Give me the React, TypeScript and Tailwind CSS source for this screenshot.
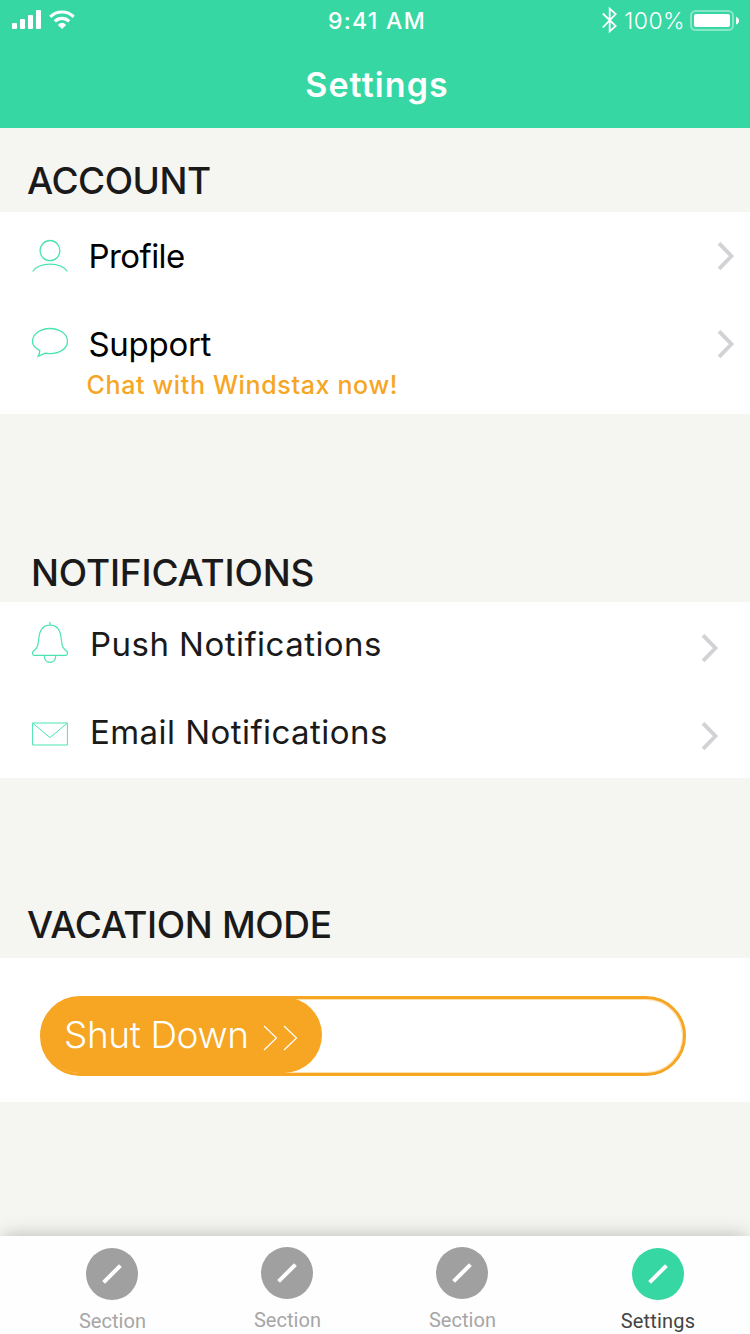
import React from "react";
import type { ReactNode } from "react";

function StatusBar() {
  return (
    <div className="flex h-[41px] items-center justify-between pr-[10px] pl-3">
      <div className="flex w-[240px] items-center gap-2">
        <svg className="-mt-px" width="29" height="20" viewBox="0 0 29 20" fill="#fff">
          <rect x="0" y="13" width="5" height="6" rx="1" />
          <rect x="8" y="9" width="5" height="10" rx="1" />
          <rect x="16" y="5" width="5" height="14" rx="1" />
          <rect x="24" y="0" width="5" height="19" rx="1" />
        </svg>
        <svg className="-mt-px" width="26" height="20" viewBox="0 0 26 20" fill="none" stroke="#fff" strokeWidth="3.2">
          <path d="M1.3 6.8A16.6 16.6 0 0 1 24.7 6.8" />
          <path d="M5.8 11.4A10.2 10.2 0 0 1 20.2 11.4" />
          <path d="M13 19L8.8 14.9Q13 10.8 17.2 14.9Z" fill="#fff" stroke="none" />
        </svg>
      </div>
      <span className="pl-[2px] text-[23px] leading-7 font-medium tracking-[1.3px]">9:41 AM</span>
      <div className="flex w-[240px] items-center justify-end">
        <svg className="-mt-px" width="15" height="28" viewBox="0 0 15 28" fill="none" stroke="#fff" strokeWidth="1.8">
          <path d="M.8 7.5L13.7 20L7.7 25.3V2.7L13.7 8L.8 21.5" />
        </svg>
        <span className="ml-[7px] text-[23px] leading-7 font-[350] tracking-[0.4px]">100%</span>
        <svg className="ml-[5px]" width="50" height="22" viewBox="0 0 50 22" fill="#fff">
          <rect x="1" y="1" width="42" height="19" rx="4.5" fill="none" stroke="#fff" strokeOpacity=".4" strokeWidth="2" />
          <rect x="4" y="4" width="36" height="13" rx="2" />
          <path d="M46 6.8Q49 8 49 10.7T46 14.6Z" />
        </svg>
      </div>
    </div>
  );
}

function Chevron() {
  return (
    <svg width="18" height="30" viewBox="0 0 18 30" fill="none" stroke="#d1d1d6" strokeWidth="3.8">
      <path d="M2 2.3L14.5 15.1L2 27.9" />
    </svg>
  );
}

function LineIcon({ children }: { children: ReactNode }) {
  return (
    <svg className="shrink-0" width="36" height="48" viewBox="0 0 36 48" fill="none" stroke="#4ce3b4" strokeWidth="1.3">
      {children}
    </svg>
  );
}

function Tab({ label, active, raised }: { label: string; active?: boolean; raised?: boolean }) {
  return (
    <div className={`flex w-[175px] flex-col items-center ${raised ? "pt-[11px]" : "pt-3"} ${active ? "ml-[21px]" : ""}`}>
      <div className={`flex size-[52px] items-center justify-center rounded-full ${active ? "bg-[#36d7a2]" : "bg-[#a0a0a0]"}`}>
        <svg width="22" height="22" viewBox="0 0 22 22" stroke="#fff" strokeWidth="4">
          <path d="M2.6 19.4L19.4 2.6" />
        </svg>
      </div>
      <span
        className={`mt-[9px] font-[Roboto,sans-serif] text-[20px] leading-6 ${active ? "tracking-[0.2px] text-[#444]" : "pl-px tracking-[0.05px] text-[#a6a6a6]"}`}
      >
        {label}
      </span>
    </div>
  );
}

export default function App() {
  return (
    <div className="flex h-[1334px] w-[750px] flex-col overflow-hidden bg-[#f5f5f1] font-[Inter,sans-serif] whitespace-nowrap">
      <header className="h-32 bg-[#36d7a2] text-white">
        <StatusBar />
        <h1 className="pl-[4px] text-center text-[34px] leading-[87px] font-semibold tracking-[1.1px]">Settings</h1>
      </header>

      <h2 className="h-[84px] pt-[21px] pl-[27px] text-[37px] leading-[63px] font-[480] tracking-[-0.5px] text-[#1a1a1a]">
        ACCOUNT
      </h2>
      <section className="bg-white text-[33px] leading-10 text-black">
        <div className="flex h-[88px] items-center pr-[15px] pl-8">
          <LineIcon>
            <ellipse cx="18" cy="18.6" rx="9.9" ry="10.1" />
            <path d="M.7 39.5C4 34.6 11 32.1 18 32.1S32 34.6 35.3 39.5" />
          </LineIcon>
          <span className="ml-[20.5px] grow tracking-[-0.57px]">Profile</span>
          <Chevron />
        </div>
        <div className="flex h-[114px] flex-col gap-[2px] pt-5">
          <div className="flex items-center pr-[15px] pl-8">
            <LineIcon>
              <path d="M7.7 30.3C3.3 28.2.5 24.9.5 21.3C.5 14.1 8.3 8.5 18 8.5S35.5 14.1 35.5 21.3S27.7 33.6 18 33.6C16.5 33.6 15 33.4 13.4 33.1C11 34.2 8.5 35.2 6.2 36.2C7.2 34.3 7.9 32.3 7.7 30.3Z" />
            </LineIcon>
            <span className="ml-[20.5px] grow tracking-[-0.3px]">Support</span>
            <Chevron />
          </div>
          <p className="pl-[86.5px] text-[25px] leading-[30px] font-medium tracking-[0.64px] text-[#f6a623]">
            Chat with Windstax now!
          </p>
        </div>
      </section>

      <h2 className="h-[188px] pt-[130px] pl-[31px] text-[37px] leading-[58px] font-[480] tracking-[-0.15px] text-[#1a1a1a]">
        NOTIFICATIONS
      </h2>
      <section className="bg-white text-[33px] leading-10 text-[#1a1a1a]">
        <div className="flex h-[88px] items-center pr-[31px] pl-8">
          <LineIcon>
            <path
              strokeWidth="1.2"
              d="M18 0V3.2M18 3.2C13.5 3.2 10.2 5.3 8.5 9.2C6.8 13 6.8 18 5.8 23.2C5.2 26.5 3.8 27 1.7 28.8C-.2 30.4 .4 33.4 2.4 33.4H33.6C35.6 33.4 36.2 30.4 34.3 28.8C32.2 27 30.8 26.5 30.2 23.2C29.2 18 29.2 13 27.5 9.2C25.8 5.3 22.5 3.2 18 3.2ZM12.3 33.8C12.3 37.8 14.8 40.3 18 40.3S23.7 37.8 23.7 33.8"
            />
          </LineIcon>
          <span className="ml-[22px] grow pb-[4px] tracking-[0.46px]">Push Notifications</span>
          <div className="pt-1">
            <Chevron />
          </div>
        </div>
        <div className="flex h-[88px] items-center pr-[31px] pl-8">
          <LineIcon>
            <path strokeWidth="1" d="M.6 13H35.4V35H.6ZM.8 13.2L18 27.6L35.2 13.2" />
          </LineIcon>
          <span className="ml-[22px] grow pb-[4px] tracking-[0.44px]">Email Notifications</span>
          <div className="pt-1">
            <Chevron />
          </div>
        </div>
      </section>

      <h2 className="h-[180px] pt-[113px] pl-[27px] text-[37px] leading-[67px] font-[480] tracking-[-0.37px] text-[#1a1a1a]">
        VACATION MODE
      </h2>
      <section className="h-36 bg-white px-10 pt-[38px]">
        <div className="h-20 w-[646px] rounded-full border-[3px] border-[#f6a623] shadow-[inset_0_0_0_1px_#f6a62359]">
          <div className="-mt-[2px] -ml-[2px] flex h-[76px] w-[281px] items-center rounded-full bg-[#f6a623] pl-[23px] text-[37px] leading-[76px] font-[270] tracking-[-0.4px] text-white">
            Shut Down
            <svg className="mt-[5px] ml-[14px]" width="36" height="26" viewBox="0 0 36 26" fill="none" stroke="#fff" strokeWidth="1.2">
              <path d="M1 1L13.5 13L1 25M21 1L33.5 13L21 25" />
            </svg>
          </div>
        </div>
      </section>

      <nav className="mt-auto flex h-[98px] bg-[#fefefe] pl-[24.5px] shadow-[0_-4px_18px_-4px_rgba(0,0,0,0.26)]">
        <Tab label="Section" />
        <Tab label="Section" raised />
        <Tab label="Section" raised />
        <Tab label="Settings" active />
      </nav>
    </div>
  );
}
